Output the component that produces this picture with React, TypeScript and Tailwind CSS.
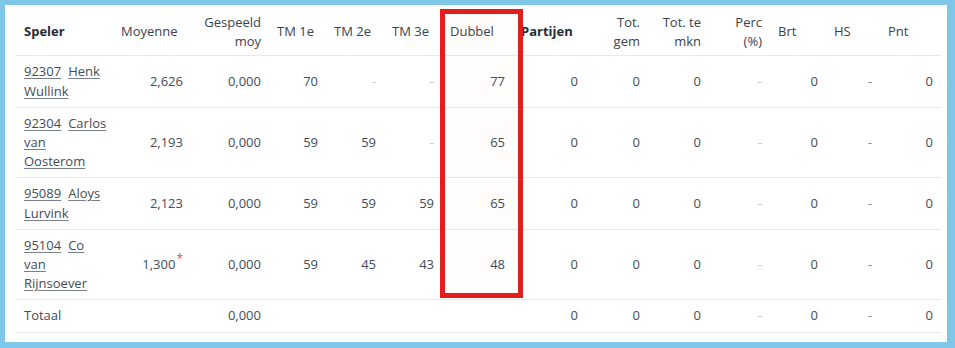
import React from "react";

type Player = {
  nr: string;
  name: string[];
  moy: string;
  star?: boolean;
  tm1: string;
  tm2: string;
  tm3: string;
  dubbel: string;
};

// name is split per displayed line; the first part sits next to the number
const players: Player[] = [
  { nr: "92307", name: ["Henk", "Wullink"], moy: "2,626", tm1: "70", tm2: "-", tm3: "-", dubbel: "77" },
  { nr: "92304", name: ["Carlos", "van", "Oosterom"], moy: "2,193", tm1: "59", tm2: "59", tm3: "-", dubbel: "65" },
  { nr: "95089", name: ["Aloys", "Lurvink"], moy: "2,123", tm1: "59", tm2: "59", tm3: "59", dubbel: "65" },
  { nr: "95104", name: ["Co", "van", "Rijnsoever"], moy: "1,300", star: true, tm1: "59", tm2: "45", tm3: "43", dubbel: "48" },
];

function Num({ v }: { v: string }) {
  if (v === "-") return <span className="text-[#c3c9d1]">-</span>;
  return <>{v}</>;
}

const td = "px-2 py-[6px] text-right align-middle";
const th = "px-2 py-[4.5px] align-middle font-normal";

export default function App() {
  return (
    <div
      className="relative h-[348px] w-[955px] overflow-hidden border-b-[6px] border-l-[5px] border-r-[8px] border-t-[5px] border-[#7fc7e7] bg-white text-[13px] leading-[19.2px] text-[#434b58]"
      style={{ fontFamily: '"Open Sans", "Noto Sans", sans-serif' }}
    >
      <table className="ml-[11px] mt-[3px] w-[925px] table-fixed border-collapse">
        <colgroup>
          <col className="w-[97px]" />
          <col className="w-[78px]" />
          <col className="w-[78px]" />
          <col className="w-[57px]" />
          <col className="w-[58px]" />
          <col className="w-[58px]" />
          <col className="w-[71px]" />
          <col className="w-[73px]" />
          <col className="w-[62px]" />
          <col className="w-[61px]" />
          <col className="w-[61px]" />
          <col className="w-[56px]" />
          <col className="w-[54px]" />
          <col className="w-[61px]" />
        </colgroup>
        <thead>
          <tr className="border-b border-[#e6e9f0] text-[#3b4250]">
            <th className={`${th} text-left !font-bold text-[#262c36]`}>Speler</th>
            <th className={`${th} text-left`}>Moyenne</th>
            <th className={`${th} text-right`}>Gespeeld moy</th>
            <th className={`${th} text-left`}>TM 1e</th>
            <th className={`${th} text-left`}>TM 2e</th>
            <th className={`${th} text-left`}>TM 3e</th>
            <th className={`${th} text-left`}>Dubbel</th>
            <th className={`${th} text-left !font-bold text-[#262c36]`}>Partijen</th>
            <th className={`${th} text-right`}>Tot. gem</th>
            <th className={`${th} text-right`}>Tot. te mkn</th>
            <th className={`${th} text-right`}>Perc (%)</th>
            <th className={`${th} text-left`}>Brt</th>
            <th className={`${th} text-left`}>HS</th>
            <th className={`${th} text-left`}>Pnt</th>
          </tr>
        </thead>
        <tbody>
          {players.map((p) => (
            <tr key={p.nr} className="border-b border-[#e6e9f0]">
              <td className="whitespace-nowrap px-2 py-[6px] text-left align-middle">
                <a href="#" className="mr-[7px] underline decoration-[#7a808a] underline-offset-2">
                  {p.nr}
                </a>
                <a href="#" className="underline decoration-[#7a808a] underline-offset-2">
                  {p.name.map((part, i) => (
                    <React.Fragment key={i}>
                      {i > 0 && <br />}
                      {part}
                    </React.Fragment>
                  ))}
                </a>
              </td>
              <td className={td}>
                {p.moy}
                {p.star && <sup className="ml-[1px] text-[12px] text-[#e5484d]">*</sup>}
              </td>
              <td className={td}>0,000</td>
              <td className={td}><Num v={p.tm1} /></td>
              <td className={td}><Num v={p.tm2} /></td>
              <td className={td}><Num v={p.tm3} /></td>
              <td className={td}>{p.dubbel}</td>
              <td className={td}>0</td>
              <td className={td}>0</td>
              <td className={td}>0</td>
              <td className={td}><span className="text-[#c3c9d1]">-</span></td>
              <td className={td}>0</td>
              <td className={td}><span className="text-[#7d8591]">-</span></td>
              <td className={td}>0</td>
            </tr>
          ))}
          <tr className="border-b border-[#e6e9f0]">
            <td className="px-2 py-[6px] text-left align-middle">Totaal</td>
            <td className={td}></td>
            <td className={td}>0,000</td>
            <td className={td}></td>
            <td className={td}></td>
            <td className={td}></td>
            <td className={td}></td>
            <td className={td}>0</td>
            <td className={td}>0</td>
            <td className={td}>0</td>
            <td className={td}><span className="text-[#c3c9d1]">-</span></td>
            <td className={td}>0</td>
            <td className={td}><span className="text-[#7d8591]">-</span></td>
            <td className={td}>0</td>
          </tr>
        </tbody>
      </table>

      {/* highlight box around the Dubbel column */}
      <div className="pointer-events-none absolute left-[435px] top-[4px] h-[289px] w-[83px] border-[5px] border-[#e41d1d] bg-[rgba(255,0,0,0.012)]" />
    </div>
  );
}
